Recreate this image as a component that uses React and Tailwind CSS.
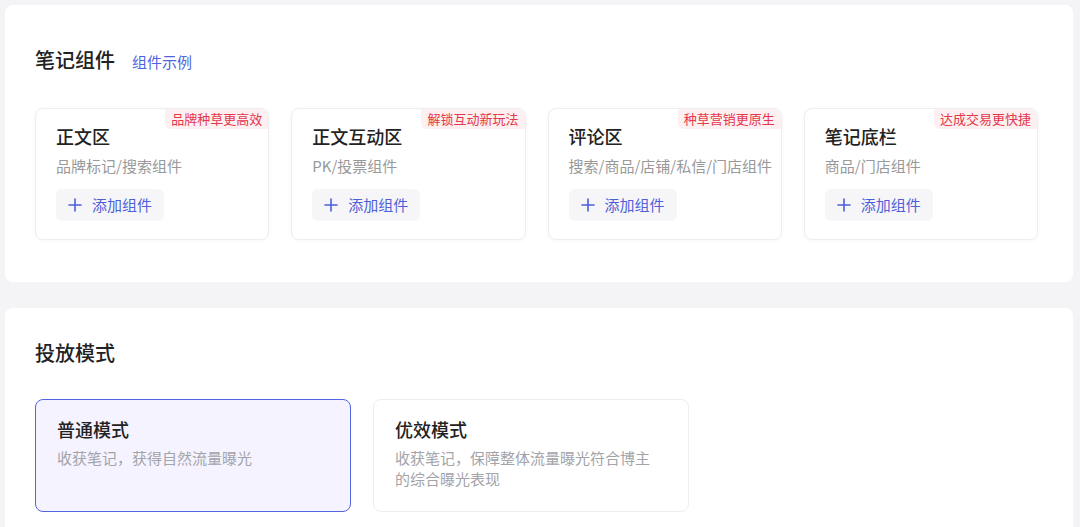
const components = [
  { title: "正文区", desc: "品牌标记/搜索组件", tag: "品牌种草更高效" },
  { title: "正文互动区", desc: "PK/投票组件", tag: "解锁互动新玩法" },
  { title: "评论区", desc: "搜索/商品/店铺/私信/门店组件", tag: "种草营销更原生" },
  { title: "笔记底栏", desc: "商品/门店组件", tag: "达成交易更快捷" },
];

const modes = [
  { title: "普通模式", desc: "收获笔记，获得自然流量曝光", active: true },
  { title: "优效模式", desc: "收获笔记，保障整体流量曝光符合博主的综合曝光表现", active: false },
];

function PlusIcon() {
  return (
    <svg width="14" height="14" viewBox="0 0 14 14" fill="none">
      <path d="M7 1v12M1 7h12" stroke="currentColor" strokeWidth="1.6" strokeLinecap="round" />
    </svg>
  );
}

export default function App() {
  return (
    <div
      className="min-h-screen w-[1080px] bg-[#f4f4f6] pl-[5px] pr-[7px] pt-[5px]"
      style={{ fontFamily: '"Noto Sans CJK SC", "Noto Sans", sans-serif' }}
    >
      {/* 笔记组件 */}
      <section className="bg-white rounded-lg pl-[30px] pr-[35px] pt-[41px] pb-[42px]">
        <div className="flex items-baseline gap-[17px] h-[28px]">
          <h2 className="text-[20px] leading-[28px] font-medium text-[#222]">笔记组件</h2>
          <a className="text-[15px] text-[#5063e0]">组件示例</a>
        </div>

        <div className="mt-[34px] grid grid-cols-4 gap-[22px]">
          {components.map((c) => (
            <div
              key={c.title}
              className="relative h-[132px] rounded-lg border border-[#eeeef2] bg-white shadow-[0_1px_4px_rgba(0,0,0,0.04)] pl-[20px] pt-[14px]"
            >
              <span className="absolute right-0 top-0 h-[20px] px-[6px] rounded-bl-md rounded-tr-lg bg-[#fdf0f1] text-[13px] leading-[20px] text-[#e5364b]">
                {c.tag}
              </span>
              <div className="text-[18px] leading-[26px] font-medium text-[#222]">{c.title}</div>
              <div className="mt-[6px] text-[15px] leading-[22px] text-[#999]">{c.desc}</div>
              <button className="mt-[12px] h-[32px] flex items-center gap-[10px] rounded-md bg-[#f6f6f8] pl-[12px] pr-[12px] text-[15px] text-[#4e5fd8]">
                <PlusIcon />
                添加组件
              </button>
            </div>
          ))}
        </div>
      </section>

      {/* 投放模式 */}
      <section className="mt-[26px] bg-white rounded-t-lg pl-[30px] pt-[31px] pb-[20px]">
        <h2 className="text-[20px] leading-[28px] font-medium text-[#222]">投放模式</h2>

        <div className="mt-[32px] flex gap-[22px]">
          {modes.map((m) => (
            <div
              key={m.title}
              className={`w-[316px] h-[113px] rounded-lg pl-[21px] pr-[30px] pt-[17px] ${
                m.active
                  ? "border-[1.5px] border-[#5264e2] bg-[#f5f3ff]"
                  : "border border-[#eeeef2] bg-white"
              }`}
            >
              <div className="text-[18px] leading-[24px] font-medium text-[#222]">{m.title}</div>
              <div className="mt-[6px] text-[15px] leading-[21px] text-[#a3a3a8]">{m.desc}</div>
            </div>
          ))}
        </div>
      </section>
    </div>
  );
}
